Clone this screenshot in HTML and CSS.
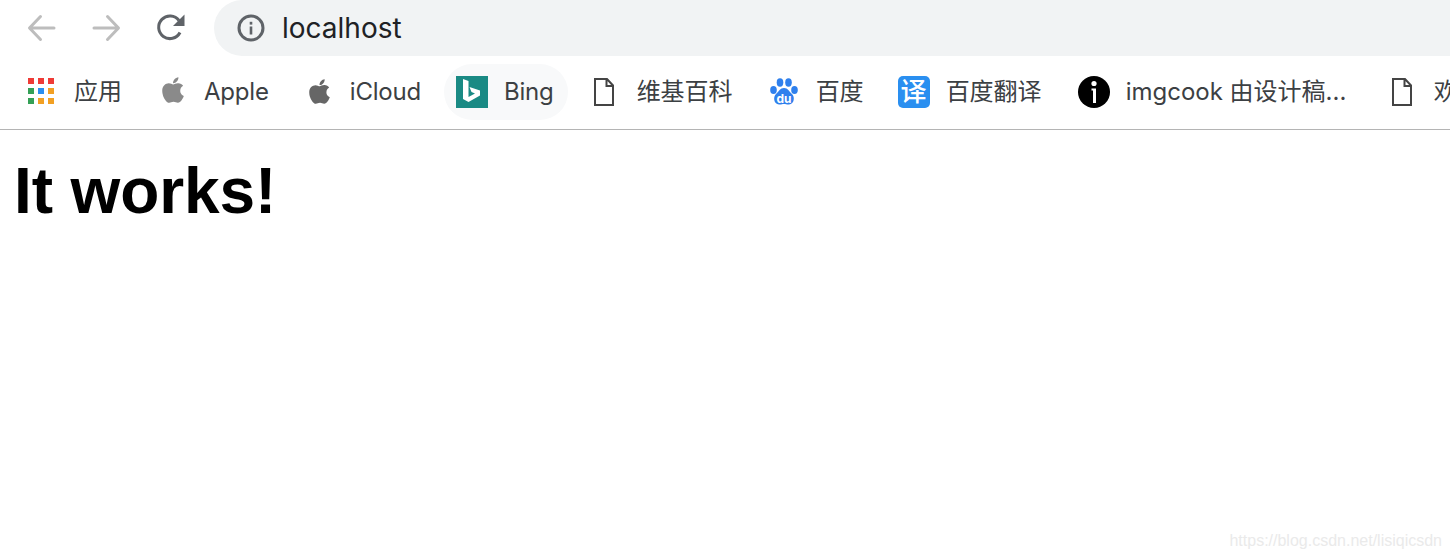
FILE: index.html
```
<!DOCTYPE html>
<html lang="zh-CN">
<head>
<meta charset="utf-8">
<title>localhost</title>
<link rel="stylesheet" href="styles.css">
</head>
<body>
<header class="chrome">
  <div class="toolbar">
    <button class="nav nav-off" aria-label="Back"><svg width="32" height="32" viewBox="0 0 32 32"><path d="M28 16H4M14.500 4.500 3.500 16l11 11.500" fill="none" stroke="currentColor" stroke-width="3" stroke-linecap="round" stroke-linejoin="round"/></svg></button>
    <button class="nav nav-off" aria-label="Forward"><svg width="32" height="32" viewBox="0 0 32 32"><path d="M4 16h24M17.500 4.500 28.500 16l-11 11.500" fill="none" stroke="currentColor" stroke-width="3" stroke-linecap="round" stroke-linejoin="round"/></svg></button>
    <button class="nav nav-reload" aria-label="Reload"><svg width="32" height="32" viewBox="0 0 32 32"><path d="M25 20.500A11.300 11.300 0 1 1 24 8.500" fill="none" stroke="currentColor" stroke-width="3"/><path d="M29.500 2.500v11.500H18z" fill="currentColor"/></svg></button>
    <div class="omnibox">
      <svg class="info" width="28" height="28" viewBox="0 0 28 28"><circle cx="14" cy="14" r="12" fill="none" stroke="currentColor" stroke-width="3"/><rect x="12.700" y="12.500" width="2.600" height="8" fill="currentColor"/><rect x="12.700" y="7.800" width="2.600" height="2.800" fill="currentColor"/></svg>
      <span class="url">localhost</span>
    </div>
  </div>
  <nav class="bookmarks">
    <a class="bm">
      <span class="ico"><svg width="28" height="28" viewBox="0 0 28 28"><g fill="#ef3b36"><rect width="6" height="6"/><rect x="10" width="6" height="6"/><rect x="20" width="6" height="6"/></g><rect y="10" width="6" height="6" fill="#34a056"/><rect x="10" y="10" width="6" height="6" fill="#2a8ff0"/><rect x="20" y="10" width="6" height="6" fill="#f2a023"/><rect y="20" width="6" height="6" fill="#34a056"/><rect x="10" y="20" width="6" height="6" fill="#f2a023"/><rect x="20" y="20" width="6" height="6" fill="#f2a023"/></svg></span>
      <span class="lbl">应用</span>
    </a>
    <a class="bm bm-latin bm-apple">
      <span class="ico"><svg class="apple" width="22" height="26" viewBox="0 32 384 448"><path fill="#8a8a8a" d="M318.700 268.700c-.2-36.700 16.400-64.400 50-84.800-18.800-26.900-47.200-41.700-84.700-44.600-35.500-2.800-74.300 20.700-88.500 20.700-15 0-49.400-19.700-76.400-19.700C63.300 141.200 4 184.800 4 273.500q0 39.300 14.400 81.200c12.800 36.700 59 126.700 107.200 125.200 25.200-.6 43-17.900 75.800-17.900 31.800 0 48.300 17.900 76.400 17.900 48.600-.7 90.400-82.500 102.600-119.300-65.200-30.700-61.700-90-61.700-91.900zm-56.600-164.200c27.300-32.400 24.800-61.900 24-72.500-24.100 1.400-52 16.400-67.900 34.900-17.500 19.800-27.800 44.300-25.600 71.900 26.100 2 49.900-11.400 69.500-34.300z"/></svg></span>
      <span class="lbl">Apple</span>
    </a>
    <a class="bm bm-latin bm-tight">
      <span class="ico"><svg class="cloud" width="21" height="25" viewBox="0 32 384 448"><path fill="#666" d="M318.700 268.700c-.2-36.700 16.400-64.400 50-84.800-18.800-26.900-47.200-41.700-84.700-44.600-35.500-2.800-74.300 20.700-88.500 20.700-15 0-49.400-19.700-76.400-19.700C63.300 141.200 4 184.800 4 273.500q0 39.300 14.400 81.200c12.800 36.700 59 126.700 107.200 125.200 25.200-.6 43-17.900 75.800-17.900 31.800 0 48.300 17.900 76.400 17.900 48.600-.7 90.400-82.500 102.600-119.300-65.200-30.700-61.700-90-61.700-91.900zm-56.600-164.200c27.300-32.400 24.800-61.900 24-72.500-24.100 1.400-52 16.400-67.900 34.900-17.500 19.800-27.800 44.300-25.600 71.900 26.100 2 49.900-11.400 69.500-34.300z"/></svg></span>
      <span class="lbl">iCloud</span>
    </a>
    <a class="bm bm-latin bm-hover">
      <span class="ico"><svg width="32" height="32" viewBox="0 0 32 32"><rect width="32" height="32" fill="#1a8a84"/><path fill="#fff" d="M7 3l5.500 2v16l6.500-3.500-3.500-1.500-2-5 10.500 3.500v5L12.500 26 7 23z"/></svg></span>
      <span class="lbl">Bing</span>
    </a>
    <a class="bm bm-wiki">
      <span class="ico"><svg width="22" height="30" viewBox="0 0 22 30"><path d="M2 2h12l6 6.500V28H2zM13.500 2v7H20" fill="none" stroke="#444" stroke-width="2"/></svg></span>
      <span class="lbl">维基百科</span>
    </a>
    <a class="bm">
      <span class="ico"><svg width="28" height="30" viewBox="0 0 28 30"><g fill="#2f80ed"><ellipse cx="3.500" cy="13" rx="3.300" ry="3.900"/><ellipse cx="10" cy="5.500" rx="3.300" ry="4.200"/><ellipse cx="18.500" cy="5.500" rx="3.300" ry="4.200"/><ellipse cx="24.500" cy="13" rx="3.300" ry="3.900"/><path d="M14 11c4 0 5 3.500 8 6 3 2.600 2.500 10-3 10.500-2 .2-3.500-.6-5-.6s-3 .8-5 .6c-5.500-.5-6-7.900-3-10.500 3-2.500 4-6 8-6z"/></g><text class="du" x="14" y="25.500" text-anchor="middle">du</text></svg></span>
      <span class="lbl">百度</span>
    </a>
    <a class="bm bm-fanyi">
      <span class="ico"><span class="fanyi">译</span></span>
      <span class="lbl">百度翻译</span>
    </a>
    <a class="bm bm-trunc">
      <span class="ico"><svg width="32" height="32" viewBox="0 0 32 32"><circle cx="16" cy="16" r="16" fill="#000"/><circle cx="16" cy="7.500" r="2.600" fill="#fff"/><path d="M13.500 12.500h4.500v14.500h-3V14.500h-1.500z" fill="#fff"/></svg></span>
      <span class="lbl">imgcook 由设计稿...</span>
    </a>
    <a class="bm">
      <span class="ico"><svg width="22" height="30" viewBox="0 0 22 30"><path d="M2 2h12l6 6.500V28H2zM13.500 2v7H20" fill="none" stroke="#444" stroke-width="2"/></svg></span>
      <span class="lbl">欢迎使用</span>
    </a>
  </nav>
</header>
<main class="page">
  <h1 class="title">It works!</h1>
</main>
<div class="watermark">https://blog.csdn.net/lisiqicsdn</div>
</body>
</html>
```
FILE: styles.css
```
* { box-sizing: border-box; }
html, body { margin: 0; height: 100%; overflow: hidden; background: #fff; }
body { font-family: Inter, "Noto Sans CJK SC", sans-serif; position: relative; }

.chrome { border-bottom: 1px solid #b4b4b4; height: 130px; }

.toolbar { display: flex; align-items: center; height: 56px; padding-left: 10px; }
.nav {
  width: 64px; height: 56px; padding: 0; border: 0; background: none;
  display: flex; align-items: center; justify-content: center; color: #5f6368;
}
.nav-off { color: #bdbdbd; }
.nav-reload svg { margin-left: 2px; }
.omnibox {
  flex: 1; height: 56px; margin-left: 12px; padding-left: 23px;
  display: flex; align-items: center; gap: 17px;
  background: #f1f3f4; border-radius: 28px 0 0 28px; color: #5f6368;
}
.url { font-size: 28px; color: #202124; }

.bookmarks {
  display: flex; align-items: center; gap: 9px; height: 56px; margin-top: 8px;
  padding-left: 14px; white-space: nowrap; overflow: hidden;
}
.bm {
  display: flex; align-items: center; gap: 16px; height: 56px; flex: none;
  padding: 0 14px 0 12px; border-radius: 28px; font-size: 24px; color: #3c4043;
}
.lbl { line-height: 30px; }
.bm-latin .lbl { letter-spacing: -.2px; }
.bm-apple { gap: 15px; }
.bm-hover { background: #f8f9fa; }
.bm-tight { gap: 14px; }
.bm-wiki .ico svg { margin-right: 2px; }
.bm-fanyi { margin-left: -1px; padding-right: 15px; }
.bm-trunc .lbl { width: 225px; }
.ico { width: 32px; height: 32px; display: flex; align-items: center; justify-content: center; flex: none; }
.apple { margin-bottom: 4px; }
.cloud { margin-bottom: 1px; }
.fanyi {
  width: 32px; height: 32px; border-radius: 5px; background: #2a8ff0; color: #fff;
  font-size: 26px; line-height: 32px; text-align: center; font-weight: 500;
}
.du { font-family: Inter, sans-serif; font-size: 12px; font-weight: 700; fill: #fff; }

.page { padding: 0 14px; }
.title { margin: 25px 0 0; font: 700 64px/1.15 "Liberation Sans", Arial, sans-serif; color: #000; letter-spacing: -.1px; }

.watermark {
  position: absolute; right: 8px; bottom: 8px;
  font: 16px "Liberation Sans", Arial, sans-serif; color: #eaeaea;
}
```
